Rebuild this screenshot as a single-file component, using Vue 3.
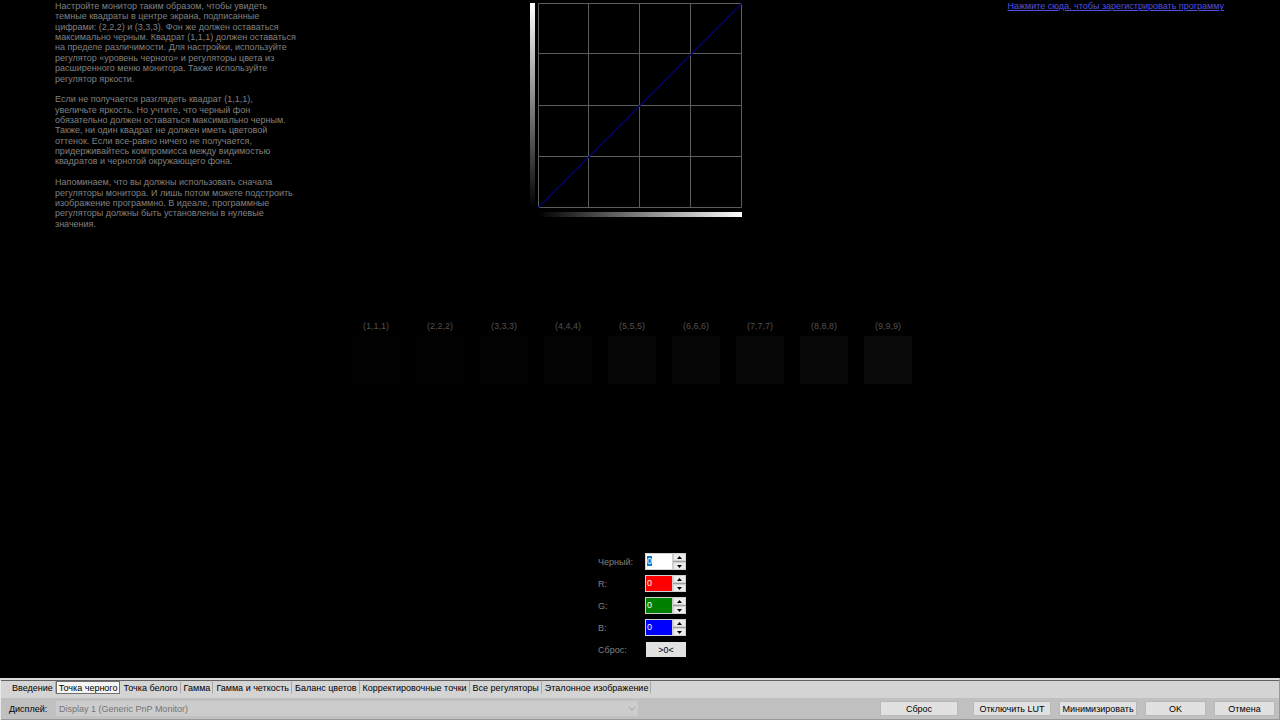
<script setup>
import { ref, reactive, onMounted } from 'vue'

const paragraphs = [
  'Настройте монитор таким образом, чтобы увидеть',
  'темные квадраты в центре экрана, подписанные',
  'цифрами: (2,2,2) и (3,3,3). Фон же должен оставаться',
  'максимально черным. Квадрат (1,1,1) должен оставаться',
  'на пределе различимости. Для настройки, используйте',
  'регулятор «уровень черного» и регуляторы цвета из',
  'расширенного меню монитора. Также используйте',
  'регулятор яркости.',
  '',
  'Если не получается разглядеть квадрат (1,1,1),',
  'увеличьте яркость. Но учтите, что черный фон',
  'обязательно должен оставаться максимально черным.',
  'Также, ни один квадрат не должен иметь цветовой',
  'оттенок. Если все-равно ничего не получается,',
  'придерживайтесь компромисса между видимостью',
  'квадратов и чернотой окружающего фона.',
  '',
  'Напоминаем, что вы должны использовать сначала',
  'регуляторы монитора. И лишь потом можете подстроить',
  'изображение программно. В идеале, программные',
  'регуляторы должны быть установлены в нулевые',
  'значения.'
]

const levels = [1, 2, 3, 4, 5, 6, 7, 8, 9]

const channels = reactive([
  { id: 'black', label: 'Черный:', value: 0 },
  { id: 'red', label: 'R:', value: 0 },
  { id: 'green', label: 'G:', value: 0 },
  { id: 'blue', label: 'B:', value: 0 }
])

const tabs = [
  'Введение',
  'Точка черного',
  'Точка белого',
  'Гамма',
  'Гамма и четкость',
  'Баланс цветов',
  'Корректировочные точки',
  'Все регуляторы',
  'Эталонное изображение'
]

const activeTab = ref('Точка черного')
const levelsForm = ref(null)

const reset = () => {
  channels.forEach(c => {
    c.value = 0
  })
}

onMounted(() => {
  const first = levelsForm.value.querySelector('input')
  first.focus()
  first.select()
})
</script>

<template>
  <div class="screen">

    <main class="stage">
      <section class="top">
        <div class="help">
          <span v-for="(line, i) in paragraphs" :key="i">{{ line }}</span>
        </div>

        <div class="chart">
          <div class="ramp-y"></div>
          <svg class="curve" viewBox="0 0 204 205">
            <path
              d="M0.5 0.5H203.5V204.5H0.5ZM50.5 0V205M101.5 0V205M152.5 0V205M0 50.5H204M0 102.5H204M0 153.5H204"
              fill="none"
              stroke="#5c5c5c"
            />
            <path d="M0 205L204 0" stroke="#00006e" stroke-width="1.3" />
          </svg>
          <div class="ramp-x"></div>
        </div>

        <div class="register">
          <a href="#">Нажмите сюда, чтобы зарегистрировать программу</a>
        </div>
      </section>

      <section class="squares">
        <div v-for="n in levels" :key="n" class="cell">
          <span>({{ n }},{{ n }},{{ n }})</span>
          <div class="square" :style="{ background: `rgb(${n},${n},${n})` }"></div>
        </div>
      </section>

      <form ref="levelsForm" class="levels" @submit.prevent>
        <div v-for="c in channels" :key="c.id" class="row">
          <label :for="c.id">{{ c.label }}</label>
          <div class="spin">
            <input :id="c.id" v-model.number="c.value" :class="c.id" type="number" />
            <div class="arrows">
              <button type="button" aria-label="Больше" @click="c.value++">
                <svg viewBox="0 0 5 3"><path d="M0 3L2.5 0L5 3Z" /></svg>
              </button>
              <button type="button" aria-label="Меньше" @click="c.value--">
                <svg viewBox="0 0 5 3"><path d="M0 0L2.5 3L5 0Z" /></svg>
              </button>
            </div>
          </div>
        </div>
        <div class="row">
          <label for="zero">Сброс:</label>
          <button id="zero" class="zero" type="button" @click="reset">&gt;0&lt;</button>
        </div>
      </form>
    </main>

    <footer class="panel">
      <nav class="tabs">
        <button
          v-for="tab in tabs"
          :key="tab"
          :class="{ active: tab === activeTab }"
          @click="activeTab = tab"
        >
          {{ tab }}
        </button>
      </nav>

      <div class="bar">
        <label for="display">Дисплей:</label>
        <div class="combo">
          <select id="display" disabled>
            <option>Display 1 (Generic PnP Monitor)</option>
          </select>
          <svg viewBox="0 0 8 5"><path d="M1 1L4 4L7 1" fill="none" stroke="#a0a0a0" /></svg>
        </div>
        <div class="actions">
          <button class="wide first" @click="reset">Сброс</button>
          <button class="wide">Отключить LUT</button>
          <button class="wide">Минимизировать</button>
          <button>OK</button>
          <button>Отмена</button>
        </div>
      </div>
    </footer>

  </div>
</template>

<style>
body{
  background:#000;
}
</style>

<style scoped>

.screen{
  min-height:100vh;
  display:flex;
  flex-direction:column;
  background:#000;
  color:#808080;
  font-family:Tahoma, "Liberation Sans", sans-serif;
  font-size:9px;
  line-height:10px;
}

button,
input,
select{
  box-sizing:border-box;
  margin:0;
  padding:0;
  border:none;
  border-radius:0;
  font:inherit;
  color:#000;
}

.stage{
  flex:1;
  display:flex;
  flex-direction:column;
}

.top{
  display:grid;
  grid-template-columns:1fr 222px 1fr;
}

/* all lines share the block height equally */
.help{
  display:grid;
  grid-auto-rows:1fr;
  height:228px;
  padding-left:55px;
  padding-top:1px;
  white-space:nowrap;
}

.chart{
  display:grid;
  grid-template-columns:5px 204px;
  grid-template-rows:205px 5px;
  column-gap:3px;
  row-gap:4px;
  padding-top:3px;
  padding-left:1px;
}

.ramp-y{
  background:linear-gradient(to top,#000,#fff);
}

.ramp-x{
  grid-column:2;
  background:linear-gradient(to right,#000,#fff);
}

.curve{
  display:block;
  width:204px;
  height:205px;
}

.register{
  padding-top:1px;
  padding-right:56px;
  text-align:right;
}

.register a{
  color:#5050e0;
}

.squares{
  display:flex;
  justify-content:center;
  margin-top:92px;
}

.cell{
  width:48px;
  padding-right:16px;
  text-align:center;
  color:#505050;
}

.square{
  height:48px;
  margin-top:5px;
}

.levels{
  display:flex;
  flex-direction:column;
  gap:5px;
  width:88px;
  margin:auto auto 20px;
  padding-left:4px;
}

.row{
  display:flex;
  align-items:center;
  justify-content:space-between;
  height:17px;
}

.spin{
  display:flex;
  width:41px;
  height:17px;
}

.spin input{
  width:28px;
  height:17px;
  padding:0 1px 1px;
  border:1px solid #d0d0d0;
  color:#fff;
  outline:none;
  appearance:textfield;
}

.spin input::-webkit-inner-spin-button{
  display:none;
}

.spin input::selection{
  background:#0078d7;
  color:#fff;
}

.spin .black{
  background:#fff;
  color:#000;
}

.spin .red{
  background:#f00;
}

.spin .green{
  background:#008000;
}

.spin .blue{
  background:#00f;
}

.arrows{
  flex:1;
  display:grid;
  grid-template-rows:8px 8px;
  row-gap:1px;
  background:#a0a0a0;
}

.arrows button{
  display:flex;
  align-items:center;
  justify-content:center;
  border:1px solid #d0d0d0;
  background:#ececec;
}

.arrows svg{
  width:5px;
  height:3px;
}

.zero{
  width:40px;
  height:15px;
  background:#e1e1e1;
}

.panel{
  border-top:2px solid #dcdcdc;
  border-left:1px solid #e8e8e8;
  border-right:1px solid #989898;
  background:#c0c0c0;
  color:#000;
}

.tabs{
  display:flex;
  height:17px;
  padding:0 8px;
  border-top:1px solid #606060;
  background:#d4d4d4;
}

.tabs button{
  height:13px;
  padding:0 2px;
  border:1px solid transparent;
  border-right-color:#a8a8a8;
  background:none;
  white-space:nowrap;
}

.tabs .active{
  border-color:#707070;
  background:#f4f4f4;
}

.bar{
  display:flex;
  align-items:center;
  height:21px;
  padding:0 4px 0 8px;
  border-bottom:1px solid #989898;
}

.bar label{
  width:47px;
}

.combo{
  position:relative;
  width:582px;
}

.combo select{
  display:block;
  width:100%;
  height:15px;
  padding-left:3px;
  background:#cccccc;
  color:#747474;
  opacity:1;
  appearance:none;
}

.combo svg{
  position:absolute;
  right:2px;
  top:5px;
  width:8px;
  height:5px;
}

.actions{
  display:flex;
  gap:8px;
  margin-left:auto;
}

.actions button{
  width:61px;
  height:15px;
  border:1px solid #b8b8b8;
  background:#e1e1e1;
  white-space:nowrap;
}

.actions .wide{
  width:78px;
}

.actions .first{
  margin-right:7px;
}

</style>
